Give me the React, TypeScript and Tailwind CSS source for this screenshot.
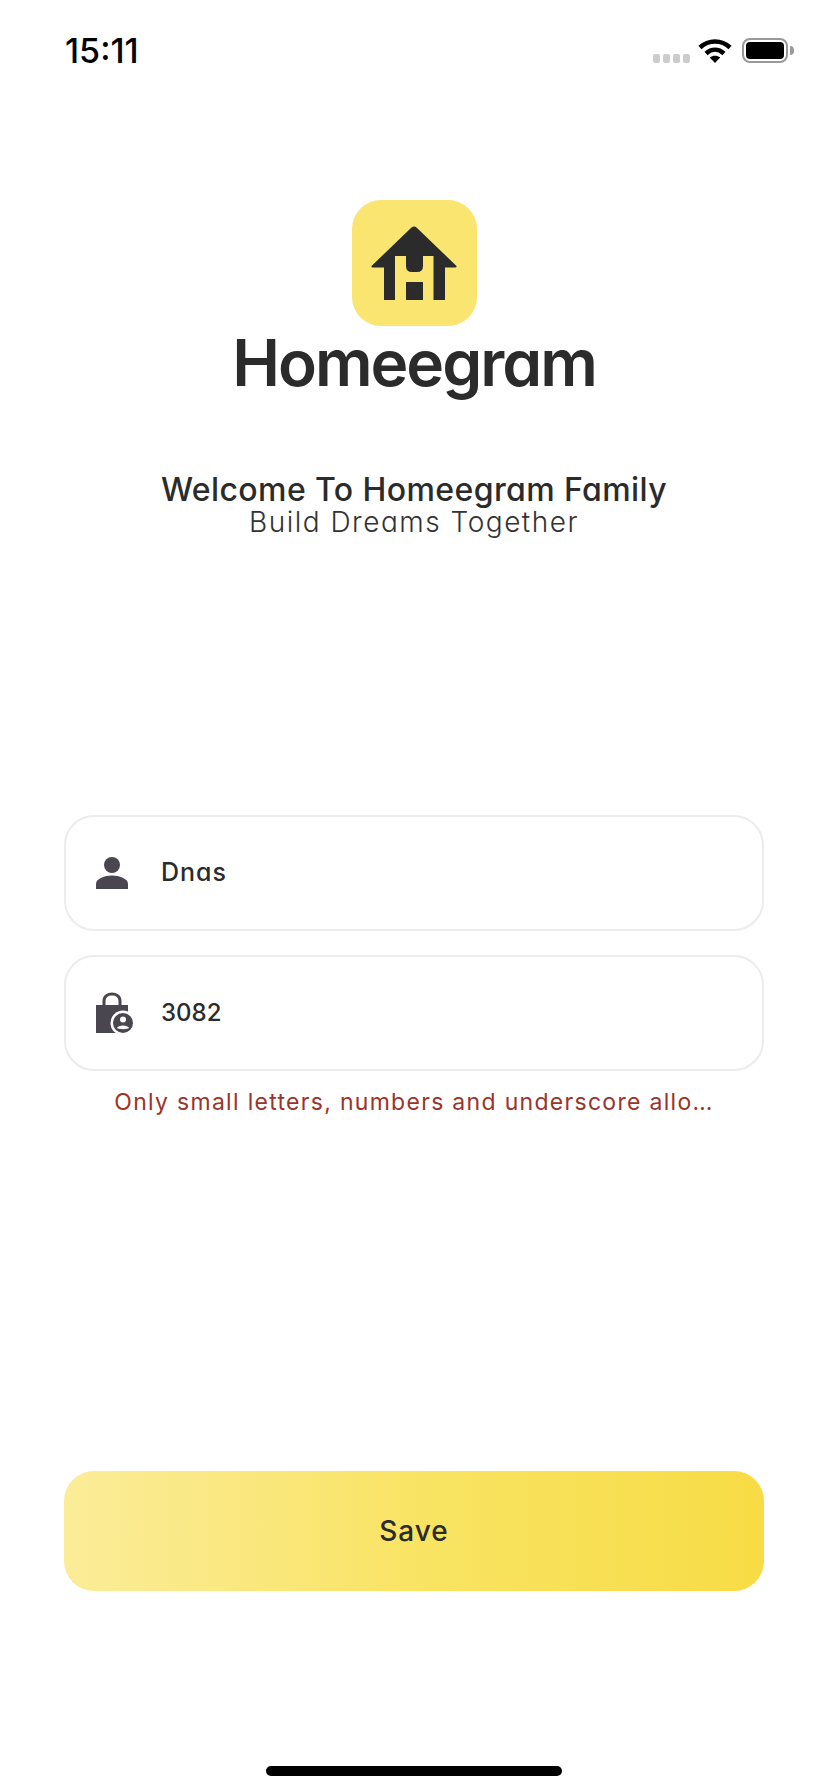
import React from 'react';

function WifiIcon() {
  return (
    <svg width="34" height="25" viewBox="0 0 34 25" className="block">
      <path d="M2 9.5C10.5 1.5 23.500 1.500 32 9.500" fill="none" stroke="#000" strokeWidth="4.500" />
      <path d="M8 15.500C13.500 10.500 20.500 10.500 26 15.500" fill="none" stroke="#000" strokeWidth="4.500" />
      <path d="M11.800 19.500C15 17 19 17 22.200 19.500L17 25Z" fill="#000" />
    </svg>
  );
}

function LogoMark() {
  return (
    <svg width="125" height="126" viewBox="0 0 125 126" className="block">
      <rect width="125" height="126" rx="29" fill="#F9E56F" />
      <path
        d="M59.500 27.500Q62 25.500 64.500 27.500L104.500 66Q105 67.500 103 67.500H93V100H32V67.500H21Q19 67.500 19.500 66Z"
        fill="#2B2B2B"
      />
      <path
        d="M43 56H54V66Q54 72 60 72H65Q71 72 71 66V56H81.500V100H71V82H54V100H43Z"
        fill="#F9E56F"
      />
    </svg>
  );
}

function PersonIcon() {
  return (
    <svg width="32" height="32" viewBox="0 0 32 32" className="block">
      <circle cx="16" cy="8" r="8" fill="#4A4650" />
      <path d="M0 32V27C0 21.500 9 18.500 16 18.500C23 18.500 32 21.500 32 27V32Z" fill="#4A4650" />
    </svg>
  );
}

function LockUserIcon() {
  return (
    <svg width="39" height="44" viewBox="0 0 39 44" className="block">
      <path d="M0 14H32V42H0Z" fill="#4A4650" />
      <path d="M8 15V10C8 0.500 24 0.500 24 10V15" fill="none" stroke="#4A4650" strokeWidth="3" />
      <circle cx="27" cy="32" r="12.500" fill="#fff" />
      <circle cx="27" cy="32" r="10" fill="#4A4650" />
      <circle cx="27" cy="28.500" r="3" fill="#fff" />
      <path d="M21 37C22 33.500 32 33.500 33 37C31.500 38.500 22.500 38.500 21 37Z" fill="#fff" />
    </svg>
  );
}

function Field({ icon, value, textClass }: { icon: React.ReactNode; value: string; textClass: string }) {
  return (
    <div className="flex h-[116px] items-center rounded-[30px] border-2 border-[#ECECEC] bg-white pl-[30px]">
      <div className="w-[65px] shrink-0">{icon}</div>
      <span className={textClass}>{value}</span>
    </div>
  );
}

export default function App() {
  return (
    <div className="flex h-[1792px] w-[828px] flex-col overflow-hidden bg-white font-['Inter',sans-serif] text-[#2B2B2B]">
      <div className="flex items-center justify-between pl-[65px] pr-[34px] pt-[36px]">
        <span className="text-[34px] font-medium leading-[29px] text-black">15:11</span>
        <div className="flex items-center">
          <div className="mr-[8px] mt-[16px] flex gap-[3px]">
            <span className="h-[9px] w-[7px] rounded-[2px] bg-[#CCCCCC]" />
            <span className="h-[9px] w-[7px] rounded-[2px] bg-[#CCCCCC]" />
            <span className="h-[9px] w-[7px] rounded-[2px] bg-[#CCCCCC]" />
            <span className="h-[9px] w-[7px] rounded-[2px] bg-[#CCCCCC]" />
          </div>
          <WifiIcon />
          <div className="ml-[10px] flex items-center">
            <div className="h-[25px] w-[46px] rounded-[8px] border-2 border-[#999999] p-[2px]">
              <div className="h-full w-full rounded-[4px] bg-black" />
            </div>
            <div className="ml-[2px] h-[9px] w-[4px] rounded-r-full bg-[#999999]" />
          </div>
        </div>
      </div>

      <div className="flex flex-col items-center pt-[135px]">
        <LogoMark />
        <div className="mt-[2px] text-[64px] font-semibold leading-[70px] tracking-[-2px] text-[#2B2B2B] [font-feature-settings:'cv11']">
          Homeegram
        </div>
      </div>

      <div className="mt-[74px] flex flex-col items-center [font-feature-settings:'cv11']">
        <div className="text-[32px] font-medium leading-[36px] tracking-[0.4px]">Welcome To Homeegram Family</div>
        <div className="text-[28px] font-light leading-[28px] tracking-[1.500px] text-[#333333]">Build Dreams Together</div>
      </div>

      <div className="mx-[64px] mt-[279px] flex flex-col gap-[24px]">
        <Field
          icon={<PersonIcon />}
          value="Dnas"
          textClass="text-[25px] font-medium tracking-[1px] text-[#2B2B2B] [font-feature-settings:'cv11']"
        />
        <Field icon={<LockUserIcon />} value="3082" textClass="text-[24px] font-medium text-[#2B2B2B]" />
      </div>

      <div className="mt-[17px] text-center text-[23px] leading-[28px] tracking-[1.300px] text-[#9B3329]">
        Only small letters, numbers and underscore allo…
      </div>

      <div className="mx-[64px] mt-[355px] flex h-[120px] items-center justify-center rounded-[30px] bg-gradient-to-r from-[#FBEC98] via-[#F9E463] to-[#F7DC45] text-[28px] font-medium tracking-[1px] text-[#2B2B2B]">
        Save
      </div>

      <div className="mt-auto mb-[16px] flex justify-center">
        <div className="h-[10px] w-[296px] rounded-full bg-black" />
      </div>
    </div>
  );
}
